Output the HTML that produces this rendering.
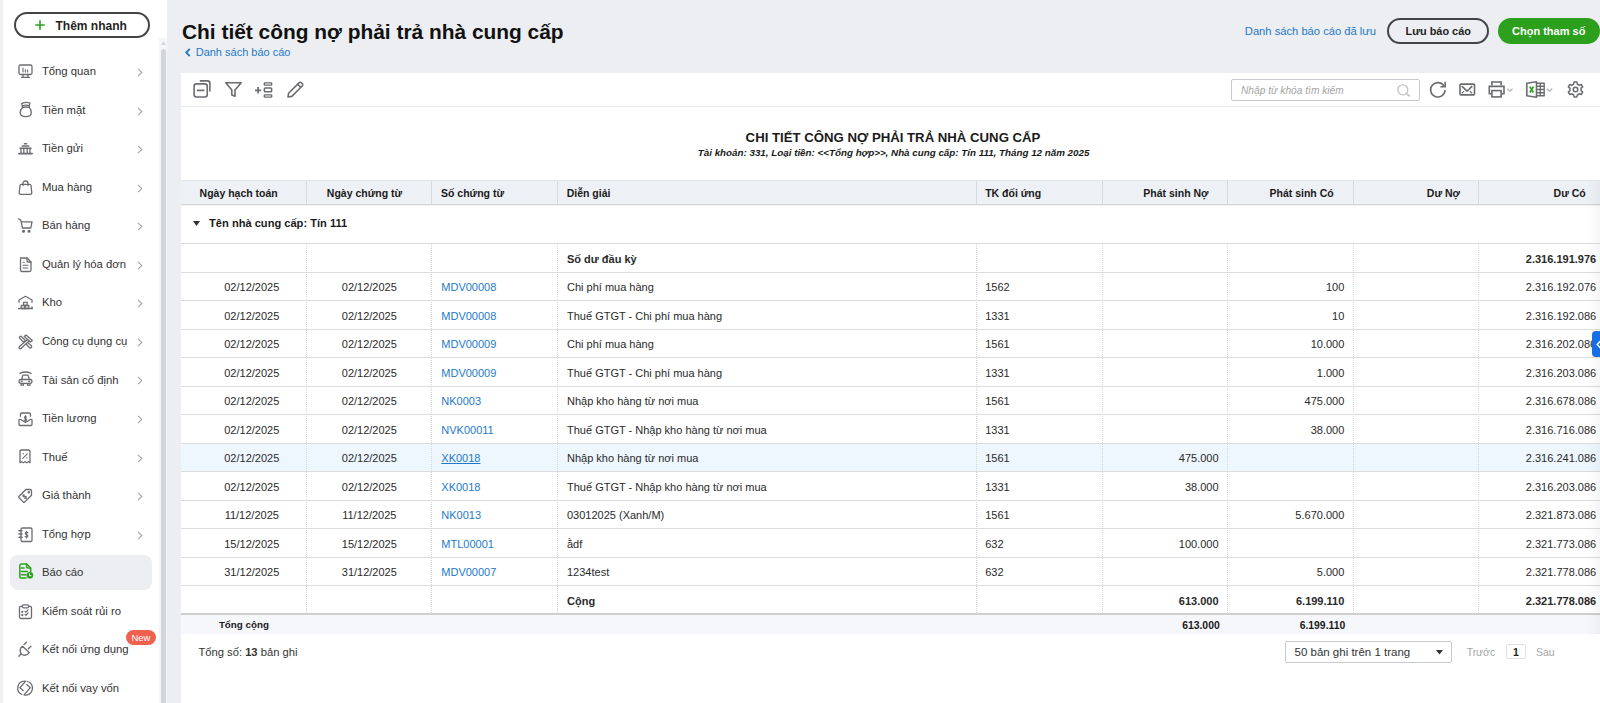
<!DOCTYPE html><html><head><meta charset="utf-8"><title>Chi tiết công nợ phải trả nhà cung cấp</title><style>
*{margin:0;padding:0;box-sizing:border-box}
html,body{width:1600px;height:703px;overflow:hidden;background:#eceef1;font-family:"Liberation Sans",sans-serif}
.t{position:absolute;white-space:nowrap}
.r{position:absolute}
svg{position:absolute;overflow:visible}
</style></head><body>
<div class="r" style="left:0px;top:0px;width:167px;height:703px;background:#fff"></div>
<div class="r" style="left:0px;top:0px;width:3px;height:703px;background:#f0f0f0"></div>
<div class="r" style="left:14px;top:12px;width:136px;height:26px;border:2px solid #444;border-radius:13px;background:#fff"></div>
<svg style="left:35px;top:20px" width="10" height="10"><path d="M5 0.3V9.7M0.3 5H9.7" stroke="#2ca01c" stroke-width="1.6"/></svg>
<div class="t" style="left:55.50px;top:19.14px;font-size:12px;line-height:15.6px;font-weight:700;color:#1f1f1f;">Thêm nhanh</div>
<div class="r" style="left:159px;top:38px;width:8px;height:665px;background:#f4f5f6"></div>
<div class="r" style="left:161px;top:48.5px;width:5px;height:654.5px;background:#d2d5da;border-radius:2.5px 2.5px 0 0"></div>
<svg style="left:161px;top:41px" width="5" height="4"><path d="M0 4L2.5 0.5L5 4Z" fill="#d2d5da"/></svg>
<svg style="left:17.5px;top:63.90px" width="15" height="15" viewBox="0 0 15 15" fill="none" stroke="#6b6c70" stroke-width="1.3" stroke-linejoin="round" stroke-linecap="round"><rect x="1" y="1" width="13" height="9.5" rx="1.5"/><path d="M5 10.5V13M10 10.5V13M3.5 13.3H11.5"/><path d="M5 4V8M7.3 5.5V8M9.6 6V8" stroke-width="1.1"/></svg>
<div class="t" style="left:41.90px;top:64.14px;font-size:11.3px;line-height:14.69px;color:#333;">Tổng quan</div>
<svg style="left:136.8px;top:68.00px" width="6" height="9" viewBox="0 0 6 9"><path d="M1 0.8L4.8 4.5L1 8.2" fill="none" stroke="#a6a6a6" stroke-width="1.1"/></svg>
<svg style="left:17.5px;top:102.45px" width="15" height="15" viewBox="0 0 15 15" fill="none" stroke="#6b6c70" stroke-width="1.3" stroke-linejoin="round" stroke-linecap="round"><path d="M3.6 1.6Q7.5 -0.3 12 1L11.2 3.6Q7.5 2.6 4.4 4.2Z"/><path d="M4.4 4.4L4.6 5.6M11.2 3.6L11.3 5.4M4.6 5.5Q7.8 4.6 11.3 5.4"/><path d="M4.6 5.6Q2 8 2.2 11Q2.6 14.6 7.8 14.6Q13 14.6 13.3 11Q13.5 7.8 11.3 5.4"/></svg>
<div class="t" style="left:41.90px;top:102.69px;font-size:11.3px;line-height:14.69px;color:#333;">Tiền mặt</div>
<svg style="left:136.8px;top:106.55px" width="6" height="9" viewBox="0 0 6 9"><path d="M1 0.8L4.8 4.5L1 8.2" fill="none" stroke="#a6a6a6" stroke-width="1.1"/></svg>
<svg style="left:17.5px;top:141.00px" width="15" height="15" viewBox="0 0 15 15" fill="none" stroke="#6b6c70" stroke-width="1.3" stroke-linejoin="round" stroke-linecap="round"><path d="M6.5 2.7H8.5M4.3 5H10.7M2 7.3H13M0.8 12.6H14.2" stroke-width="1.6"/><path d="M3 7.5V12.3M5.8 7.5V12.3M9.2 7.5V12.3M12 7.5V12.3" stroke-width="1.3"/></svg>
<div class="t" style="left:41.90px;top:141.24px;font-size:11.3px;line-height:14.69px;color:#333;">Tiền gửi</div>
<svg style="left:136.8px;top:145.10px" width="6" height="9" viewBox="0 0 6 9"><path d="M1 0.8L4.8 4.5L1 8.2" fill="none" stroke="#a6a6a6" stroke-width="1.1"/></svg>
<svg style="left:17.5px;top:179.55px" width="15" height="15" viewBox="0 0 15 15" fill="none" stroke="#6b6c70" stroke-width="1.3" stroke-linejoin="round" stroke-linecap="round"><path d="M5 5.5V3.5Q5 1 7.5 1Q10 1 10 3.5V5.5"/><path d="M3.2 4.3H11.8Q12.8 4.3 13 5.5L13.8 13Q13.8 14.4 12.4 14.4H2.6Q1.2 14.4 1.2 13L2 5.5Q2.2 4.3 3.2 4.3Z"/></svg>
<div class="t" style="left:41.90px;top:179.79px;font-size:11.3px;line-height:14.69px;color:#333;">Mua hàng</div>
<svg style="left:136.8px;top:183.65px" width="6" height="9" viewBox="0 0 6 9"><path d="M1 0.8L4.8 4.5L1 8.2" fill="none" stroke="#a6a6a6" stroke-width="1.1"/></svg>
<svg style="left:17.5px;top:218.10px" width="15" height="15" viewBox="0 0 15 15" fill="none" stroke="#6b6c70" stroke-width="1.3" stroke-linejoin="round" stroke-linecap="round"><path d="M0.5 0.8Q2.8 1.2 3.2 3.3L4.3 10H12.8L14 3.8H3.6"/><circle cx="5.5" cy="13.2" r="0.9" fill="#6b6c70"/><circle cx="11" cy="13.2" r="0.9" fill="#6b6c70"/></svg>
<div class="t" style="left:41.90px;top:218.34px;font-size:11.3px;line-height:14.69px;color:#333;">Bán hàng</div>
<svg style="left:136.8px;top:222.20px" width="6" height="9" viewBox="0 0 6 9"><path d="M1 0.8L4.8 4.5L1 8.2" fill="none" stroke="#a6a6a6" stroke-width="1.1"/></svg>
<svg style="left:17.5px;top:256.65px" width="15" height="15" viewBox="0 0 15 15" fill="none" stroke="#6b6c70" stroke-width="1.3" stroke-linejoin="round" stroke-linecap="round"><path d="M2.5 1H9L13 5V13Q13 14.5 11.5 14.5H4Q2.5 14.5 2.5 13V2.5Q2.5 1 4 1Z"/><path d="M9 1V4Q9 5 10 5H13"/><path d="M5 5.3H6.3M5 8.3H10M5 11H10" stroke-width="1.1"/></svg>
<div class="t" style="left:41.90px;top:256.89px;font-size:11.3px;line-height:14.69px;color:#333;">Quản lý hóa đơn</div>
<svg style="left:136.8px;top:260.75px" width="6" height="9" viewBox="0 0 6 9"><path d="M1 0.8L4.8 4.5L1 8.2" fill="none" stroke="#a6a6a6" stroke-width="1.1"/></svg>
<svg style="left:17.5px;top:295.20px" width="15" height="15" viewBox="0 0 15 15" fill="none" stroke="#6b6c70" stroke-width="1.3" stroke-linejoin="round" stroke-linecap="round"><path d="M1 7.3V5L7.5 1.3L14 5V7.3"/><path d="M0.5 13.5H14.5M14 12V13.5" /><rect x="5.6" y="7.3" width="3.6" height="3.2"/><rect x="3.2" y="10.5" width="3.8" height="3"/><rect x="7" y="10.5" width="3.8" height="3"/></svg>
<div class="t" style="left:41.90px;top:295.44px;font-size:11.3px;line-height:14.69px;color:#333;">Kho</div>
<svg style="left:136.8px;top:299.30px" width="6" height="9" viewBox="0 0 6 9"><path d="M1 0.8L4.8 4.5L1 8.2" fill="none" stroke="#a6a6a6" stroke-width="1.1"/></svg>
<svg style="left:17.5px;top:333.75px" width="15" height="15" viewBox="0 0 15 15" fill="none" stroke="#6b6c70" stroke-width="1.3" stroke-linejoin="round" stroke-linecap="round"><path d="M1.2 3.6L2.9 2.1L7.2 6.3L5.4 8.1Z"/><path d="M6.2 2.4L8 1L14.3 6.6L12.4 8Z"/><path d="M9.6 5.6L1.4 12.6Q0.6 13.6 1.5 14.4Q2.4 15.2 3.3 14.3L11.1 6.9"/><path d="M8.3 10.3L11.3 13.5Q12.3 14.5 13.3 13.6Q14.2 12.6 13.2 11.6L9.9 8.7"/></svg>
<div class="t" style="left:41.90px;top:333.99px;font-size:11.3px;line-height:14.69px;color:#333;">Công cụ dụng cụ</div>
<svg style="left:136.8px;top:337.85px" width="6" height="9" viewBox="0 0 6 9"><path d="M1 0.8L4.8 4.5L1 8.2" fill="none" stroke="#a6a6a6" stroke-width="1.1"/></svg>
<svg style="left:17.5px;top:372.30px" width="15" height="15" viewBox="0 0 15 15" fill="none" stroke="#6b6c70" stroke-width="1.3" stroke-linejoin="round" stroke-linecap="round"><g transform="translate(0 -0.8)"><path d="M2 2.2Q7.5 -0.6 13 2.2"/><path d="M3.8 8.5L4.5 5Q4.8 4 5.8 4H9.2Q10.2 4 10.5 5L11.2 8.5"/><rect x="1" y="8.3" width="13" height="3.9" rx="1.8"/><path d="M3 12.2V14H5.5V12.2M9.5 12.2V14H12V12.2"/><path d="M3.3 10.2H4.3M10.7 10.2H11.7" stroke-width="1.1"/></g></svg>
<div class="t" style="left:41.90px;top:372.54px;font-size:11.3px;line-height:14.69px;color:#333;">Tài sản cố định</div>
<svg style="left:136.8px;top:376.40px" width="6" height="9" viewBox="0 0 6 9"><path d="M1 0.8L4.8 4.5L1 8.2" fill="none" stroke="#a6a6a6" stroke-width="1.1"/></svg>
<svg style="left:17.5px;top:410.85px" width="15" height="15" viewBox="0 0 15 15" fill="none" stroke="#6b6c70" stroke-width="1.3" stroke-linejoin="round" stroke-linecap="round"><path d="M2.5 5.3V3.2Q2.5 2 3.7 2H11.3Q12.5 2 12.5 3.2V5.3"/><path d="M1 9.5Q1 8.2 2.2 8.3L7.5 11.5L12.8 8.3Q14 8.2 14 9.5V13.3Q14 14.5 12.8 14.5H2.2Q1 14.5 1 13.3Z"/><path transform="translate(7.5 7.6) scale(0.72)" d="M1.6 -2.2Q1.1 -3 0 -3Q-1.5 -3 -1.5 -1.7Q-1.5 -0.6 0 -0.2Q1.6 0.2 1.6 1.4Q1.6 2.9 0 2.9Q-1.2 2.9 -1.8 2M0 -4.1V4" stroke-width="1.53"/></svg>
<div class="t" style="left:41.90px;top:411.09px;font-size:11.3px;line-height:14.69px;color:#333;">Tiền lương</div>
<svg style="left:136.8px;top:414.95px" width="6" height="9" viewBox="0 0 6 9"><path d="M1 0.8L4.8 4.5L1 8.2" fill="none" stroke="#a6a6a6" stroke-width="1.1"/></svg>
<svg style="left:17.5px;top:449.40px" width="15" height="15" viewBox="0 0 15 15" fill="none" stroke="#6b6c70" stroke-width="1.3" stroke-linejoin="round" stroke-linecap="round"><path d="M2 13.7V2.3Q2 1 3.3 1H10.7Q12 1 12 2.3V13.7L10.4 12.7L8.7 13.7L7 12.7L5.3 13.7L3.6 12.7Z"/><path d="M4.8 9.3L9.3 4.8" stroke-width="1.1"/><circle cx="5.2" cy="4.8" r="0.7" fill="#6b6c70" stroke="none"/><circle cx="8.9" cy="8.9" r="0.7" fill="#6b6c70" stroke="none"/></svg>
<div class="t" style="left:41.90px;top:449.64px;font-size:11.3px;line-height:14.69px;color:#333;">Thuế</div>
<svg style="left:136.8px;top:453.50px" width="6" height="9" viewBox="0 0 6 9"><path d="M1 0.8L4.8 4.5L1 8.2" fill="none" stroke="#a6a6a6" stroke-width="1.1"/></svg>
<svg style="left:17.5px;top:487.95px" width="15" height="15" viewBox="0 0 15 15" fill="none" stroke="#6b6c70" stroke-width="1.3" stroke-linejoin="round" stroke-linecap="round"><path d="M7.8 1.5H12.2Q13.5 1.5 13.5 2.8V7.2L6.8 13.9Q6 14.6 5.2 13.9L1.1 9.8Q0.4 9 1.1 8.2Z"/><circle cx="10.8" cy="4.2" r="0.6" fill="#6b6c70"/><g transform="rotate(-45 6.6 8.6)"><path transform="translate(6.6 8.6) scale(0.62)" d="M1.6 -2.2Q1.1 -3 0 -3Q-1.5 -3 -1.5 -1.7Q-1.5 -0.6 0 -0.2Q1.6 0.2 1.6 1.4Q1.6 2.9 0 2.9Q-1.2 2.9 -1.8 2M0 -4.1V4" stroke-width="1.77"/></g></svg>
<div class="t" style="left:41.90px;top:488.19px;font-size:11.3px;line-height:14.69px;color:#333;">Giá thành</div>
<svg style="left:136.8px;top:492.05px" width="6" height="9" viewBox="0 0 6 9"><path d="M1 0.8L4.8 4.5L1 8.2" fill="none" stroke="#a6a6a6" stroke-width="1.1"/></svg>
<svg style="left:17.5px;top:526.50px" width="15" height="15" viewBox="0 0 15 15" fill="none" stroke="#6b6c70" stroke-width="1.3" stroke-linejoin="round" stroke-linecap="round"><rect x="3" y="1" width="11" height="13.5" rx="1.3"/><path d="M1 3.8H4M1 7H4M1 10.2H4" stroke-width="1.5"/><path transform="translate(8.6 7.7) scale(0.85)" d="M1.6 -2.2Q1.1 -3 0 -3Q-1.5 -3 -1.5 -1.7Q-1.5 -0.6 0 -0.2Q1.6 0.2 1.6 1.4Q1.6 2.9 0 2.9Q-1.2 2.9 -1.8 2M0 -4.1V4" stroke-width="1.29"/></svg>
<div class="t" style="left:41.90px;top:526.74px;font-size:11.3px;line-height:14.69px;color:#333;">Tổng hợp</div>
<svg style="left:136.8px;top:530.60px" width="6" height="9" viewBox="0 0 6 9"><path d="M1 0.8L4.8 4.5L1 8.2" fill="none" stroke="#a6a6a6" stroke-width="1.1"/></svg>
<div class="r" style="left:10px;top:555px;width:142px;height:35px;background:#eceef1;border-radius:8px"></div>
<svg style="left:17.5px;top:565.05px" width="15" height="15" viewBox="0 0 15 15" fill="none" stroke="#2ca01c" stroke-width="1.5" stroke-linejoin="round" stroke-linecap="round"><path d="M8 13.1H3.6Q1.85 13.1 1.85 11.4V0.7Q1.85 -1.05 3.6 -1.05H8.6L12.65 3V6.8"/><path d="M8.6 -0.9V1.5Q8.6 3 10.1 3H12.5"/><path d="M3.7 2.95H6.1M3.7 6.45H9.2M3.7 9.65H7.8" stroke-width="1.5"/><circle cx="11.9" cy="10.35" r="3.3" fill="#2ca01c" stroke="none"/><path d="M11.5 8.9V10.7H13" stroke="#fff" stroke-width="0.9"/></svg>
<div class="t" style="left:41.90px;top:565.29px;font-size:11.3px;line-height:14.69px;color:#333;">Báo cáo</div>
<svg style="left:17.5px;top:603.60px" width="15" height="15" viewBox="0 0 15 15" fill="none" stroke="#6b6c70" stroke-width="1.3" stroke-linejoin="round" stroke-linecap="round"><path d="M4 2.3H3Q1.5 2.3 1.5 3.8V13Q1.5 14.5 3 14.5H12Q13.5 14.5 13.5 13V3.8Q13.5 2.3 12 2.3H11"/><rect x="4.2" y="0.8" width="6.6" height="3" rx="1.5"/><path d="M7 7.3L8 8.2L10 5.8M7 10.5L8 11.3L10 9" stroke-width="1.2"/><circle cx="4.3" cy="7.8" r="0.5" fill="#6b6c70"/><circle cx="4.3" cy="11" r="0.5" fill="#6b6c70"/></svg>
<div class="t" style="left:41.90px;top:603.84px;font-size:11.3px;line-height:14.69px;color:#333;">Kiểm soát rủi ro</div>
<svg style="left:17.5px;top:642.15px" width="15" height="15" viewBox="0 0 15 15" fill="none" stroke="#6b6c70" stroke-width="1.3" stroke-linejoin="round" stroke-linecap="round"><path d="M4.5 4.3L11.3 10.5Q9.5 13.5 6 13.2Q2.5 12.5 2.2 9Q2 6 4.5 4.3Z"/><path d="M6 2.5L8.5 0.2M10.3 6.7L13 4.3M3.2 11.8L0.8 14.3"/></svg>
<div class="t" style="left:41.90px;top:642.39px;font-size:11.3px;line-height:14.69px;color:#333;">Kết nối ứng dụng</div>
<svg style="left:17.5px;top:680.70px" width="15" height="15" viewBox="0 0 15 15" fill="none" stroke="#6b6c70" stroke-width="1.3" stroke-linejoin="round" stroke-linecap="round"><g transform="translate(-0.7 -0.5)"><path d="M8.5 0.6L2.6 7.2L5.9 10"/><path d="M7.4 0.6A7 7 0 0 0 4.6 14"/><path d="M9.4 4.1L13 7.2L6.8 14.4"/><path d="M10.4 1A7 7 0 0 1 7.4 14.6"/></g></svg>
<div class="t" style="left:41.90px;top:680.94px;font-size:11.3px;line-height:14.69px;color:#333;">Kết nối vay vốn</div>
<div class="r" style="left:125.8px;top:630px;width:30.200000000000003px;height:15px;background:#f0604f;border-radius:8px"></div>
<div class="t" style="left:125.90px;width:30px;text-align:center;top:631.73px;font-size:9.5px;line-height:12.35px;color:#fff;">New</div>
<div class="t" style="left:182.00px;top:17.97px;font-size:20.9px;line-height:27.17px;font-weight:700;color:#111;">Chi tiết công nợ phải trả nhà cung cấp</div>
<svg style="left:184.5px;top:47.5px" width="6" height="9" viewBox="0 0 6 9"><path d="M4.8 0.8L1.2 4.5L4.8 8.2" fill="none" stroke="#1e7ac8" stroke-width="1.8"/></svg>
<div class="t" style="left:195.70px;top:45.04px;font-size:11px;line-height:14.3px;color:#1e7ac8;">Danh sách báo cáo</div>
<div class="t" style="left:1244.80px;top:23.74px;font-size:11.2px;line-height:14.56px;color:#1e7ac8;">Danh sách báo cáo đã lưu</div>
<div class="r" style="left:1387px;top:18px;width:102px;height:26px;border:2px solid #444;border-radius:13px"></div>
<div class="t" style="left:1388.20px;width:100px;text-align:center;top:23.94px;font-size:10.9px;line-height:14.17px;font-weight:700;color:#222;">Lưu báo cáo</div>
<div class="r" style="left:1497.5px;top:18px;width:102.0px;height:26px;background:#2ca01c;border-radius:13px"></div>
<div class="t" style="left:1498.70px;width:100px;text-align:center;top:23.84px;font-size:11px;line-height:14.3px;font-weight:700;color:#fff;">Chọn tham số</div>
<div class="r" style="left:181px;top:73px;width:1419px;height:630px;background:#fff"></div>
<div class="r" style="left:181px;top:106px;width:1419px;height:1px;background:#e8e9eb"></div>
<svg style="left:192.5px;top:80px" width="18" height="18" viewBox="0 0 18 18" fill="none" stroke="#6b6c70" stroke-width="1.6" stroke-linejoin="round"><rect x="1.1" y="3.9" width="13.15" height="13.1" rx="2.5"/><path d="M6.8 0.9H14.4Q16.9 0.9 16.9 3.4V11.4" /><path d="M3.9 10.4H11.4" stroke-width="1.7"/></svg>
<svg style="left:224.5px;top:82px" width="17" height="15" viewBox="0 0 17 15" fill="none" stroke="#6b6c70" stroke-width="1.6" stroke-linejoin="round"><path d="M0.8 0.8H16.2L10 8V14.3L6.8 13V8Z"/></svg>
<svg style="left:254.5px;top:82px" width="18" height="16" viewBox="0 0 18 16" fill="none" stroke="#6b6c70" stroke-width="1.5" stroke-linejoin="round"><path d="M0 8.3H6.2M3.1 5.1V11.6" stroke-width="1.7"/><rect x="9.3" y="0.9" width="7.4" height="2.2" rx="0.5" stroke-width="1.4"/><rect x="9.4" y="6.05" width="7.2" height="3.65" rx="0.8" stroke-width="1.6"/><rect x="9.3" y="12.9" width="7.4" height="2.2" rx="0.5" stroke-width="1.4"/></svg>
<svg style="left:286.5px;top:81px" width="17" height="17" viewBox="0 0 17 17" fill="none" stroke="#6b6c70" stroke-width="1.6" stroke-linejoin="round"><path d="M1 16L1.6 12.2L12.2 1.6Q13.2 0.8 14.2 1.6L15.4 2.8Q16.2 3.8 15.4 4.8L4.8 15.4Z"/><path d="M10.6 3.2L13.8 6.4"/></svg>
<div class="r" style="left:1231px;top:79px;width:189px;height:21.5px;border:1px solid #c9cacd;border-radius:2px"></div>
<div class="t" style="left:1241.00px;top:84.14px;font-size:10.2px;line-height:13.26px;color:#a3a3a3;font-style:italic">Nhập từ khóa tìm kiếm</div>
<svg style="left:1396.5px;top:84px" width="14" height="13" viewBox="0 0 14 13" fill="none" stroke="#c2c2c2" stroke-width="1.3"><circle cx="5.8" cy="5.8" r="5"/><path d="M9.6 9.6L12.8 12.4" stroke-width="1.6"/></svg>
<svg style="left:1429px;top:81px" width="18" height="17" viewBox="0 0 18 17" fill="none" stroke="#6b6c70" stroke-width="1.6"><path d="M15.2 5.5A7.2 7.2 0 1 0 16 9"/><path d="M16.2 0.8V5.8H11.4" stroke-linejoin="miter"/></svg>
<svg style="left:1458.5px;top:83px" width="17" height="13" viewBox="0 0 17 13" fill="none" stroke="#6b6c70" stroke-width="1.6" stroke-linejoin="round"><rect x="1" y="1.1" width="14.5" height="10.8" rx="1"/><path d="M2.8 3.1L8.1 8.2L13.2 3.1" /><path d="M2.8 10.4L5 8.2M10.9 8.2L13.2 10.4" stroke-width="1.2"/></svg>
<svg style="left:1487.5px;top:81px" width="27" height="17" viewBox="0 0 27 17" fill="none" stroke="#6b6c70" stroke-width="1.6" stroke-linejoin="miter"><path d="M3.9 4.5V1.05H13.1V4.5"/><path d="M3.9 12.8H1.3V5.4H16V12.8H13.1"/><rect x="3.9" y="9.6" width="9.2" height="6.3"/><path d="M19.5 7.8L22 10.2L24.5 7.8" stroke="#b9bcc2" stroke-width="1.5" stroke-linejoin="round"/></svg>
<svg style="left:1526px;top:81px" width="28" height="17" viewBox="0 0 28 17" fill="none" stroke="#6b6c70" stroke-width="1.6" stroke-linejoin="round"><path d="M0.8 2.2L10.5 0.8V16.2L0.8 14.8Z"/><path d="M10.5 2.2H18.2V14.8H10.5M14.3 2.2V14.8M10.5 5.3H18.2M10.5 8.5H18.2M10.5 11.7H18.2" stroke-width="1.4"/><path d="M3.8 5.5L7.5 11.5M7.5 5.5L3.8 11.5" stroke="#2ca01c" stroke-width="1.6"/><path d="M20.8 7.6L23.5 10.2L26.2 7.6" stroke="#b9bcc2" stroke-width="1.5"/></svg>
<svg style="left:1566.6px;top:81px" width="17" height="17" viewBox="0 0 24 24" fill="none" stroke="#6b6c70" stroke-width="2.1" stroke-linejoin="round"><path d="M10 1.5H14L14.6 4.5Q16 5 17.2 5.9L20.1 4.9L22.1 8.3L19.8 10.4Q20 12 19.8 13.6L22.1 15.7L20.1 19.1L17.2 18.1Q16 19 14.6 19.5L14 22.5H10L9.4 19.5Q8 19 6.8 18.1L3.9 19.1L1.9 15.7L4.2 13.6Q4 12 4.2 10.4L1.9 8.3L3.9 4.9L6.8 5.9Q8 5 9.4 4.5Z"/><circle cx="12" cy="12" r="3.2"/></svg>
<div class="t" style="left:593.00px;width:600px;text-align:center;top:128.65px;font-size:13.2px;line-height:17.16px;font-weight:700;color:#1a1a1a;">CHI TIẾT CÔNG NỢ PHẢI TRẢ NHÀ CUNG CẤP</div>
<div class="t" style="left:543.60px;width:700px;text-align:center;top:147.43px;font-size:9.8px;line-height:12.74px;font-weight:700;color:#1a1a1a;font-style:italic">Tài khoản: 331, Loại tiền: &lt;&lt;Tổng hợp&gt;&gt;, Nhà cung cấp: Tín 111, Tháng 12 năm 2025</div>
<div class="r" style="left:181px;top:180px;width:1419px;height:24px;background:#edf0f5;border-top:1px solid #e3e5e8"></div>
<div class="r" style="left:181px;top:204px;width:1419px;height:1px;background:#d3d5d9"></div>
<div class="r" style="left:181px;top:205px;width:1419px;height:1px;background:#f0f1f2"></div>
<div class="r" style="left:305.9px;top:181px;width:1.0px;height:23px;background:#d6d9de"></div>
<div class="r" style="left:431.1px;top:181px;width:1.0px;height:23px;background:#d6d9de"></div>
<div class="r" style="left:556.5px;top:181px;width:1.0px;height:23px;background:#d6d9de"></div>
<div class="r" style="left:976.2px;top:181px;width:1.0px;height:23px;background:#d6d9de"></div>
<div class="r" style="left:1101.5px;top:181px;width:1.0px;height:23px;background:#d6d9de"></div>
<div class="r" style="left:1227.1px;top:181px;width:1.0px;height:23px;background:#d6d9de"></div>
<div class="r" style="left:1352.7px;top:181px;width:1.0px;height:23px;background:#d6d9de"></div>
<div class="r" style="left:1478.3px;top:181px;width:1.0px;height:23px;background:#d6d9de"></div>
<div class="t" style="left:178.70px;width:120px;text-align:center;top:186.64px;font-size:10.5px;line-height:13.65px;font-weight:700;color:#1a1a1a;">Ngày hạch toán</div>
<div class="t" style="left:304.50px;width:120px;text-align:center;top:186.64px;font-size:10.5px;line-height:13.65px;font-weight:700;color:#1a1a1a;">Ngày chứng từ</div>
<div class="t" style="left:441.00px;top:186.64px;font-size:10.5px;line-height:13.65px;font-weight:700;color:#1a1a1a;">Số chứng từ</div>
<div class="t" style="left:566.70px;top:186.64px;font-size:10.5px;line-height:13.65px;font-weight:700;color:#1a1a1a;">Diễn giải</div>
<div class="t" style="left:985.20px;top:186.64px;font-size:10.5px;line-height:13.65px;font-weight:700;color:#1a1a1a;">TK đối ứng</div>
<div class="t" style="left:1088.60px;width:120px;text-align:right;top:186.64px;font-size:10.5px;line-height:13.65px;font-weight:700;color:#1a1a1a;">Phát sinh Nợ</div>
<div class="t" style="left:1213.70px;width:120px;text-align:right;top:186.64px;font-size:10.5px;line-height:13.65px;font-weight:700;color:#1a1a1a;">Phát sinh Có</div>
<div class="t" style="left:1340.00px;width:120px;text-align:right;top:186.64px;font-size:10.5px;line-height:13.65px;font-weight:700;color:#1a1a1a;">Dư Nợ</div>
<div class="t" style="left:1465.70px;width:120px;text-align:right;top:186.64px;font-size:10.5px;line-height:13.65px;font-weight:700;color:#1a1a1a;">Dư Có</div>
<svg style="left:192.5px;top:221px" width="7" height="5" viewBox="0 0 7 5"><path d="M0 0H7L3.5 5Z" fill="#333"/></svg>
<div class="t" style="left:209.10px;top:216.14px;font-size:11.1px;line-height:14.43px;font-weight:700;color:#1a1a1a;">Tên nhà cung cấp: Tín 111</div>
<div class="r" style="left:181px;top:443.0px;width:1419px;height:28.5px;background:#eef6fe"></div>
<div class="r" style="left:181px;top:243.0px;width:1419px;height:1.0px;background:#dcdcdc"></div>
<div class="r" style="left:181px;top:271.5px;width:1419px;height:1.0px;background:#dcdcdc"></div>
<div class="r" style="left:181px;top:300.0px;width:1419px;height:1.0px;background:#dcdcdc"></div>
<div class="r" style="left:181px;top:328.5px;width:1419px;height:1.0px;background:#dcdcdc"></div>
<div class="r" style="left:181px;top:357.0px;width:1419px;height:1.0px;background:#dcdcdc"></div>
<div class="r" style="left:181px;top:385.5px;width:1419px;height:1.0px;background:#dcdcdc"></div>
<div class="r" style="left:181px;top:414.0px;width:1419px;height:1.0px;background:#dcdcdc"></div>
<div class="r" style="left:181px;top:442.5px;width:1419px;height:1.0px;background:#dcdcdc"></div>
<div class="r" style="left:181px;top:471.0px;width:1419px;height:1.0px;background:#dcdcdc"></div>
<div class="r" style="left:181px;top:499.5px;width:1419px;height:1.0px;background:#dcdcdc"></div>
<div class="r" style="left:181px;top:528.0px;width:1419px;height:1.0px;background:#dcdcdc"></div>
<div class="r" style="left:181px;top:556.5px;width:1419px;height:1.0px;background:#dcdcdc"></div>
<div class="r" style="left:181px;top:585.0px;width:1419px;height:1.0px;background:#dcdcdc"></div>
<div class="r" style="left:181px;top:613.2px;width:1419px;height:2.0px;background:#cfcfcf"></div>
<div class="r" style="left:305.9px;top:244.0px;width:1.0px;height:369.20000000000005px;background-image:linear-gradient(#d6d6d6 50%,transparent 50%);background-size:1px 2px"></div>
<div class="r" style="left:431.1px;top:244.0px;width:1.0px;height:369.20000000000005px;background-image:linear-gradient(#d6d6d6 50%,transparent 50%);background-size:1px 2px"></div>
<div class="r" style="left:556.5px;top:244.0px;width:1.0px;height:369.20000000000005px;background-image:linear-gradient(#d6d6d6 50%,transparent 50%);background-size:1px 2px"></div>
<div class="r" style="left:976.2px;top:244.0px;width:1.0px;height:369.20000000000005px;background-image:linear-gradient(#d6d6d6 50%,transparent 50%);background-size:1px 2px"></div>
<div class="r" style="left:1101.5px;top:244.0px;width:1.0px;height:369.20000000000005px;background-image:linear-gradient(#d6d6d6 50%,transparent 50%);background-size:1px 2px"></div>
<div class="r" style="left:1227.1px;top:244.0px;width:1.0px;height:369.20000000000005px;background-image:linear-gradient(#d6d6d6 50%,transparent 50%);background-size:1px 2px"></div>
<div class="r" style="left:1352.7px;top:244.0px;width:1.0px;height:369.20000000000005px;background-image:linear-gradient(#d6d6d6 50%,transparent 50%);background-size:1px 2px"></div>
<div class="r" style="left:1478.3px;top:244.0px;width:1.0px;height:369.20000000000005px;background-image:linear-gradient(#d6d6d6 50%,transparent 50%);background-size:1px 2px"></div>
<div class="t" style="left:567.00px;top:251.54px;font-size:11px;line-height:14.3px;font-weight:700;color:#2a2a2a;">Số dư đầu kỳ</div>
<div class="t" style="left:1486.20px;width:110px;text-align:right;top:251.54px;font-size:11px;line-height:14.3px;font-weight:700;color:#2a2a2a;">2.316.191.976</div>
<div class="t" style="left:196.75px;width:110px;text-align:center;top:280.04px;font-size:11px;line-height:14.3px;color:#2a2a2a;">02/12/2025</div>
<div class="t" style="left:314.30px;width:110px;text-align:center;top:280.04px;font-size:11px;line-height:14.3px;color:#2a2a2a;">02/12/2025</div>
<div class="t" style="left:441.30px;top:280.04px;font-size:11px;line-height:14.3px;color:#1e7ac8;">MDV00008</div>
<div class="t" style="left:567.00px;top:280.04px;font-size:11px;line-height:14.3px;color:#2a2a2a;">Chi phí mua hàng</div>
<div class="t" style="left:985.20px;top:280.04px;font-size:11px;line-height:14.3px;color:#2a2a2a;">1562</div>
<div class="t" style="left:1234.30px;width:110px;text-align:right;top:280.04px;font-size:11px;line-height:14.3px;color:#2a2a2a;">100</div>
<div class="t" style="left:1486.20px;width:110px;text-align:right;top:280.04px;font-size:11px;line-height:14.3px;color:#2a2a2a;">2.316.192.076</div>
<div class="t" style="left:196.75px;width:110px;text-align:center;top:308.54px;font-size:11px;line-height:14.3px;color:#2a2a2a;">02/12/2025</div>
<div class="t" style="left:314.30px;width:110px;text-align:center;top:308.54px;font-size:11px;line-height:14.3px;color:#2a2a2a;">02/12/2025</div>
<div class="t" style="left:441.30px;top:308.54px;font-size:11px;line-height:14.3px;color:#1e7ac8;">MDV00008</div>
<div class="t" style="left:567.00px;top:308.54px;font-size:11px;line-height:14.3px;color:#2a2a2a;">Thuế GTGT - Chi phí mua hàng</div>
<div class="t" style="left:985.20px;top:308.54px;font-size:11px;line-height:14.3px;color:#2a2a2a;">1331</div>
<div class="t" style="left:1234.30px;width:110px;text-align:right;top:308.54px;font-size:11px;line-height:14.3px;color:#2a2a2a;">10</div>
<div class="t" style="left:1486.20px;width:110px;text-align:right;top:308.54px;font-size:11px;line-height:14.3px;color:#2a2a2a;">2.316.192.086</div>
<div class="t" style="left:196.75px;width:110px;text-align:center;top:337.04px;font-size:11px;line-height:14.3px;color:#2a2a2a;">02/12/2025</div>
<div class="t" style="left:314.30px;width:110px;text-align:center;top:337.04px;font-size:11px;line-height:14.3px;color:#2a2a2a;">02/12/2025</div>
<div class="t" style="left:441.30px;top:337.04px;font-size:11px;line-height:14.3px;color:#1e7ac8;">MDV00009</div>
<div class="t" style="left:567.00px;top:337.04px;font-size:11px;line-height:14.3px;color:#2a2a2a;">Chi phí mua hàng</div>
<div class="t" style="left:985.20px;top:337.04px;font-size:11px;line-height:14.3px;color:#2a2a2a;">1561</div>
<div class="t" style="left:1234.30px;width:110px;text-align:right;top:337.04px;font-size:11px;line-height:14.3px;color:#2a2a2a;">10.000</div>
<div class="t" style="left:1486.20px;width:110px;text-align:right;top:337.04px;font-size:11px;line-height:14.3px;color:#2a2a2a;">2.316.202.086</div>
<div class="t" style="left:196.75px;width:110px;text-align:center;top:365.54px;font-size:11px;line-height:14.3px;color:#2a2a2a;">02/12/2025</div>
<div class="t" style="left:314.30px;width:110px;text-align:center;top:365.54px;font-size:11px;line-height:14.3px;color:#2a2a2a;">02/12/2025</div>
<div class="t" style="left:441.30px;top:365.54px;font-size:11px;line-height:14.3px;color:#1e7ac8;">MDV00009</div>
<div class="t" style="left:567.00px;top:365.54px;font-size:11px;line-height:14.3px;color:#2a2a2a;">Thuế GTGT - Chi phí mua hàng</div>
<div class="t" style="left:985.20px;top:365.54px;font-size:11px;line-height:14.3px;color:#2a2a2a;">1331</div>
<div class="t" style="left:1234.30px;width:110px;text-align:right;top:365.54px;font-size:11px;line-height:14.3px;color:#2a2a2a;">1.000</div>
<div class="t" style="left:1486.20px;width:110px;text-align:right;top:365.54px;font-size:11px;line-height:14.3px;color:#2a2a2a;">2.316.203.086</div>
<div class="t" style="left:196.75px;width:110px;text-align:center;top:394.04px;font-size:11px;line-height:14.3px;color:#2a2a2a;">02/12/2025</div>
<div class="t" style="left:314.30px;width:110px;text-align:center;top:394.04px;font-size:11px;line-height:14.3px;color:#2a2a2a;">02/12/2025</div>
<div class="t" style="left:441.30px;top:394.04px;font-size:11px;line-height:14.3px;color:#1e7ac8;">NK0003</div>
<div class="t" style="left:567.00px;top:394.04px;font-size:11px;line-height:14.3px;color:#2a2a2a;">Nhập kho hàng từ nơi mua</div>
<div class="t" style="left:985.20px;top:394.04px;font-size:11px;line-height:14.3px;color:#2a2a2a;">1561</div>
<div class="t" style="left:1234.30px;width:110px;text-align:right;top:394.04px;font-size:11px;line-height:14.3px;color:#2a2a2a;">475.000</div>
<div class="t" style="left:1486.20px;width:110px;text-align:right;top:394.04px;font-size:11px;line-height:14.3px;color:#2a2a2a;">2.316.678.086</div>
<div class="t" style="left:196.75px;width:110px;text-align:center;top:422.54px;font-size:11px;line-height:14.3px;color:#2a2a2a;">02/12/2025</div>
<div class="t" style="left:314.30px;width:110px;text-align:center;top:422.54px;font-size:11px;line-height:14.3px;color:#2a2a2a;">02/12/2025</div>
<div class="t" style="left:441.30px;top:422.54px;font-size:11px;line-height:14.3px;color:#1e7ac8;">NVK00011</div>
<div class="t" style="left:567.00px;top:422.54px;font-size:11px;line-height:14.3px;color:#2a2a2a;">Thuế GTGT - Nhập kho hàng từ nơi mua</div>
<div class="t" style="left:985.20px;top:422.54px;font-size:11px;line-height:14.3px;color:#2a2a2a;">1331</div>
<div class="t" style="left:1234.30px;width:110px;text-align:right;top:422.54px;font-size:11px;line-height:14.3px;color:#2a2a2a;">38.000</div>
<div class="t" style="left:1486.20px;width:110px;text-align:right;top:422.54px;font-size:11px;line-height:14.3px;color:#2a2a2a;">2.316.716.086</div>
<div class="t" style="left:196.75px;width:110px;text-align:center;top:451.04px;font-size:11px;line-height:14.3px;color:#2a2a2a;">02/12/2025</div>
<div class="t" style="left:314.30px;width:110px;text-align:center;top:451.04px;font-size:11px;line-height:14.3px;color:#2a2a2a;">02/12/2025</div>
<div class="t" style="left:441.30px;top:451.04px;font-size:11px;line-height:14.3px;color:#1e7ac8;text-decoration:underline">XK0018</div>
<div class="t" style="left:567.00px;top:451.04px;font-size:11px;line-height:14.3px;color:#2a2a2a;">Nhập kho hàng từ nơi mua</div>
<div class="t" style="left:985.20px;top:451.04px;font-size:11px;line-height:14.3px;color:#2a2a2a;">1561</div>
<div class="t" style="left:1108.60px;width:110px;text-align:right;top:451.04px;font-size:11px;line-height:14.3px;color:#2a2a2a;">475.000</div>
<div class="t" style="left:1486.20px;width:110px;text-align:right;top:451.04px;font-size:11px;line-height:14.3px;color:#2a2a2a;">2.316.241.086</div>
<div class="t" style="left:196.75px;width:110px;text-align:center;top:479.54px;font-size:11px;line-height:14.3px;color:#2a2a2a;">02/12/2025</div>
<div class="t" style="left:314.30px;width:110px;text-align:center;top:479.54px;font-size:11px;line-height:14.3px;color:#2a2a2a;">02/12/2025</div>
<div class="t" style="left:441.30px;top:479.54px;font-size:11px;line-height:14.3px;color:#1e7ac8;">XK0018</div>
<div class="t" style="left:567.00px;top:479.54px;font-size:11px;line-height:14.3px;color:#2a2a2a;">Thuế GTGT - Nhập kho hàng từ nơi mua</div>
<div class="t" style="left:985.20px;top:479.54px;font-size:11px;line-height:14.3px;color:#2a2a2a;">1331</div>
<div class="t" style="left:1108.60px;width:110px;text-align:right;top:479.54px;font-size:11px;line-height:14.3px;color:#2a2a2a;">38.000</div>
<div class="t" style="left:1486.20px;width:110px;text-align:right;top:479.54px;font-size:11px;line-height:14.3px;color:#2a2a2a;">2.316.203.086</div>
<div class="t" style="left:196.75px;width:110px;text-align:center;top:508.04px;font-size:11px;line-height:14.3px;color:#2a2a2a;">11/12/2025</div>
<div class="t" style="left:314.30px;width:110px;text-align:center;top:508.04px;font-size:11px;line-height:14.3px;color:#2a2a2a;">11/12/2025</div>
<div class="t" style="left:441.30px;top:508.04px;font-size:11px;line-height:14.3px;color:#1e7ac8;">NK0013</div>
<div class="t" style="left:567.00px;top:508.04px;font-size:11px;line-height:14.3px;color:#2a2a2a;">03012025 (Xanh/M)</div>
<div class="t" style="left:985.20px;top:508.04px;font-size:11px;line-height:14.3px;color:#2a2a2a;">1561</div>
<div class="t" style="left:1234.30px;width:110px;text-align:right;top:508.04px;font-size:11px;line-height:14.3px;color:#2a2a2a;">5.670.000</div>
<div class="t" style="left:1486.20px;width:110px;text-align:right;top:508.04px;font-size:11px;line-height:14.3px;color:#2a2a2a;">2.321.873.086</div>
<div class="t" style="left:196.75px;width:110px;text-align:center;top:536.54px;font-size:11px;line-height:14.3px;color:#2a2a2a;">15/12/2025</div>
<div class="t" style="left:314.30px;width:110px;text-align:center;top:536.54px;font-size:11px;line-height:14.3px;color:#2a2a2a;">15/12/2025</div>
<div class="t" style="left:441.30px;top:536.54px;font-size:11px;line-height:14.3px;color:#1e7ac8;">MTL00001</div>
<div class="t" style="left:567.00px;top:536.54px;font-size:11px;line-height:14.3px;color:#2a2a2a;">ằdf</div>
<div class="t" style="left:985.20px;top:536.54px;font-size:11px;line-height:14.3px;color:#2a2a2a;">632</div>
<div class="t" style="left:1108.60px;width:110px;text-align:right;top:536.54px;font-size:11px;line-height:14.3px;color:#2a2a2a;">100.000</div>
<div class="t" style="left:1486.20px;width:110px;text-align:right;top:536.54px;font-size:11px;line-height:14.3px;color:#2a2a2a;">2.321.773.086</div>
<div class="t" style="left:196.75px;width:110px;text-align:center;top:565.04px;font-size:11px;line-height:14.3px;color:#2a2a2a;">31/12/2025</div>
<div class="t" style="left:314.30px;width:110px;text-align:center;top:565.04px;font-size:11px;line-height:14.3px;color:#2a2a2a;">31/12/2025</div>
<div class="t" style="left:441.30px;top:565.04px;font-size:11px;line-height:14.3px;color:#1e7ac8;">MDV00007</div>
<div class="t" style="left:567.00px;top:565.04px;font-size:11px;line-height:14.3px;color:#2a2a2a;">1234test</div>
<div class="t" style="left:985.20px;top:565.04px;font-size:11px;line-height:14.3px;color:#2a2a2a;">632</div>
<div class="t" style="left:1234.30px;width:110px;text-align:right;top:565.04px;font-size:11px;line-height:14.3px;color:#2a2a2a;">5.000</div>
<div class="t" style="left:1486.20px;width:110px;text-align:right;top:565.04px;font-size:11px;line-height:14.3px;color:#2a2a2a;">2.321.778.086</div>
<div class="t" style="left:567.00px;top:593.54px;font-size:11px;line-height:14.3px;font-weight:700;color:#2a2a2a;">Cộng</div>
<div class="t" style="left:1108.60px;width:110px;text-align:right;top:593.54px;font-size:11px;line-height:14.3px;font-weight:700;color:#2a2a2a;">613.000</div>
<div class="t" style="left:1234.30px;width:110px;text-align:right;top:593.54px;font-size:11px;line-height:14.3px;font-weight:700;color:#2a2a2a;">6.199.110</div>
<div class="t" style="left:1486.20px;width:110px;text-align:right;top:593.54px;font-size:11px;line-height:14.3px;font-weight:700;color:#2a2a2a;">2.321.778.086</div>
<div class="r" style="left:181px;top:615.2px;width:1419px;height:19.199999999999932px;background:#f6f7fb"></div>
<div class="t" style="left:218.90px;top:618.83px;font-size:9.8px;line-height:12.74px;font-weight:700;color:#1a1a1a;">Tổng cộng</div>
<div class="t" style="left:1109.70px;width:110px;text-align:right;top:618.64px;font-size:10.4px;line-height:13.52px;font-weight:700;color:#1a1a1a;">613.000</div>
<div class="t" style="left:1235.30px;width:110px;text-align:right;top:618.64px;font-size:10.4px;line-height:13.52px;font-weight:700;color:#1a1a1a;">6.199.110</div>
<div class="t" style="left:198.50px;top:644.74px;font-size:11.2px;line-height:14.56px;color:#333;">Tổng số: <b>13</b> bản ghi</div>
<div class="r" style="left:1285.4px;top:641.2px;width:166.79999999999995px;height:21.399999999999977px;border:1px solid #c9cacd;border-radius:2px"></div>
<div class="t" style="left:1294.50px;top:645.04px;font-size:11.5px;line-height:14.95px;color:#333;">50 bản ghi trên 1 trang</div>
<svg style="left:1435.5px;top:650px" width="7" height="4.5" viewBox="0 0 7 4.5"><path d="M0 0H7L3.5 4.5Z" fill="#333"/></svg>
<div class="t" style="left:1466.70px;top:645.94px;font-size:10.4px;line-height:13.52px;color:#a5a5a5;">Trước</div>
<div class="r" style="left:1506.2px;top:643.6px;width:19.399999999999864px;height:15.799999999999955px;border:1px solid #e0e0e0;border-radius:2px"></div>
<div class="t" style="left:1505.90px;width:20px;text-align:center;top:645.84px;font-size:10.5px;line-height:13.65px;font-weight:700;color:#222;">1</div>
<div class="t" style="left:1536.00px;top:645.94px;font-size:10.4px;line-height:13.52px;color:#a5a5a5;">Sau</div>
<div class="r" style="left:1586px;top:181px;width:14px;height:453px;background:linear-gradient(90deg,rgba(0,0,0,0),rgba(0,0,0,0.035))"></div>
<div class="r" style="left:1591.5px;top:331px;width:11.5px;height:26.30000000000001px;background:#1570e6;border-radius:4px"></div>
<svg style="left:1595.5px;top:340px" width="6" height="9" viewBox="0 0 6 9"><path d="M4.5 1L1.2 4.5L4.5 8" fill="none" stroke="#fff" stroke-width="1.5"/></svg>

</body></html>
